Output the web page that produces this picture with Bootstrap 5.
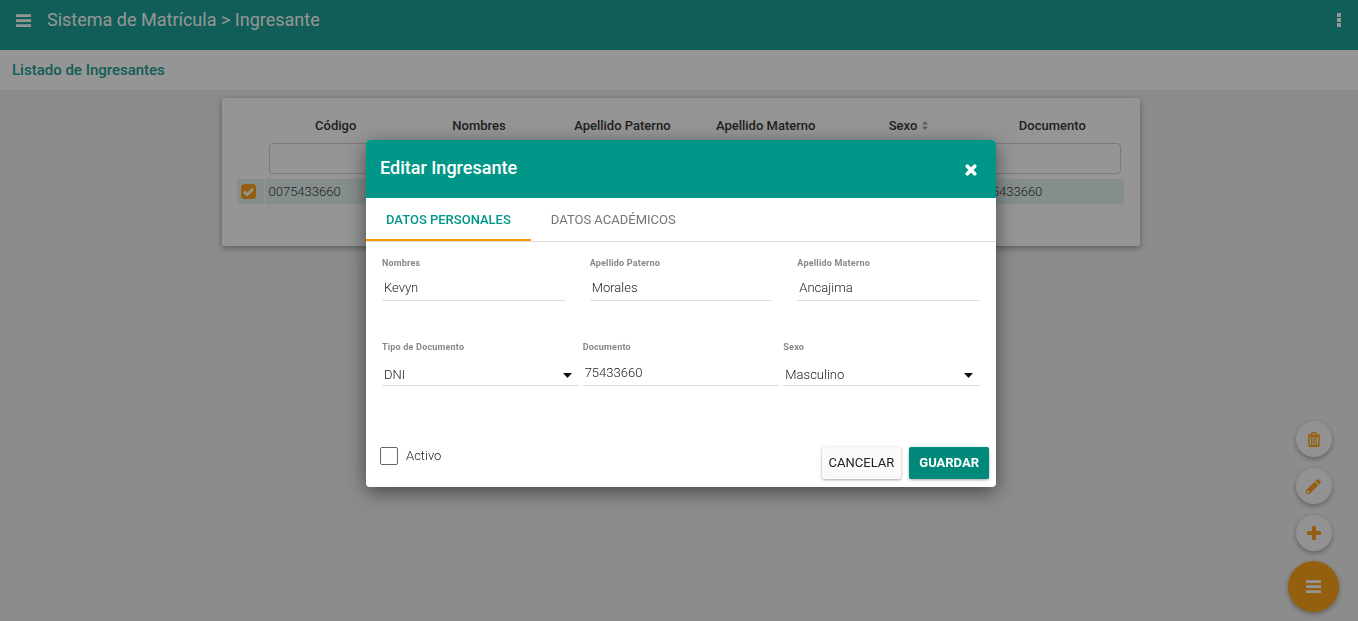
<!DOCTYPE html>
<html lang="es">
<head>
<meta charset="utf-8">
<meta name="viewport" content="width=device-width, initial-scale=1">
<title>Sistema de Matrícula</title>
<link href="https://cdn.jsdelivr.net/npm/bootstrap@5.3.0/dist/css/bootstrap.min.css" rel="stylesheet">
<style>
  :root { --teal: #009688; --teal-dark: #00897b; --amber: #ff9800; }
  body { font-family: Roboto, sans-serif; font-size: 13px; font-weight: 300; line-height: 20px; color: #212121; background: #eee; min-height: 100vh; }
  svg { display: block; }
  .app-bar { background: var(--teal); height: 50px; padding: 0 16px 10px; color: #fff; }
  .app-title { font-size: 18px; font-weight: 400; line-height: 24px; }
  .page-head { background: #fff; height: 40px; padding: 0 12px; }
  .page-head h1 { font-size: 15px; font-weight: 500; color: var(--teal); }
  .list-area { padding: 8px 16px 8px 20px; }
  .list-panel { max-width: 918px; min-height: 148px; padding: 15px 16px 15px 15px; background: #fff; border-radius: 2px; box-shadow: 0 2px 5px rgba(0,0,0,.26), 0 2px 10px rgba(0,0,0,.16); }
  .grid-table { table-layout: fixed; width: 100%; }
  .grid-table .pick { width: 27px; }
  .grid-table th { font-weight: 500; text-align: center; height: 25px; padding: 0; }
  .grid-table .filters td { padding: 5px 3px 5px 5px; }
  .grid-table .filters input { height: 31px; border-radius: 4px; border: 1px solid #ccc; }
  .grid-table .picked td { background: #e0f2ef; height: 25px; padding: 0 4px; }
  .grid-table .picked td:first-child { border-right: 1px solid #fff; }
  .row-check { width: 15px; height: 15px; margin: 0; border-radius: 3px !important; display: block; }
  .row-check:checked { background-color: var(--amber); border-color: var(--amber); background-size: 15px 15px; background-image: url("data:image/svg+xml,%3Csvg xmlns='http://www.w3.org/2000/svg' viewBox='0 0 15 15'%3E%3Cpath d='M3 7.500l3.200 3.200L12 5' fill='none' stroke='%23fff' stroke-width='2.600'/%3E%3C/svg%3E"); }
  .fabs { right: 19px; bottom: 9px; gap: 11px; }
  .fab { width: 36px; height: 36px; border: 0; border-radius: 50%; background: #fafafa; color: var(--amber); box-shadow: 0 2px 5px rgba(0,0,0,.35); }
  .fab-main { width: 51px; height: 51px; background: var(--amber); color: #fff; margin-top: -1px; }
  .veil { background: rgba(33,33,33,.48); z-index: 1040; }
  .edit-modal { padding: 140px 16px 16px 20px; z-index: 1050; }
  .edit-modal .modal-dialog { max-width: 630px; margin: 0 auto; }
  .edit-modal .modal-content { border: 0; border-radius: 4px; box-shadow: 0 5px 20px rgba(0,0,0,.5); color: inherit; }
  .edit-modal .modal-header { background: var(--teal); color: #fff; height: 58px; padding: 0 19px 2px 14px; border: 0; border-radius: 4px 4px 0 0; }
  .edit-modal .modal-title { font-size: 18px; font-weight: 500; line-height: 24px; }
  .plain-btn { background: none; border: 0; padding: 0; color: inherit; }
  .edit-tabs { border-bottom: 1px solid #ddd; }
  .edit-tabs .nav-link { border: 0; border-bottom: 2px solid transparent; border-radius: 0; margin: 0; height: 43px; padding: 12px 20px 9px; font-weight: 400; color: #757575; text-transform: uppercase; }
  .edit-tabs .nav-link.active { color: var(--teal); border-color: var(--amber); font-weight: 500; background: none; }
  .edit-modal .modal-body { padding: 15px 16px 0; }
  .fields-a, .fields-b { display: grid; grid-template-columns: repeat(3, minmax(0, 1fr)); }
  .fields-a { column-gap: 25px; height: 84px; }
  .fields-b { column-gap: 4px; height: 104px; }
  .field label { display: block; font-size: 9px; font-weight: 700; line-height: 12px; color: #888; letter-spacing: .2px; }
  .line-in { display: block; width: 100%; height: 32px; border: 0; border-bottom: 1px solid #ddd; border-radius: 0; background: #fff; padding: 9px 2px 3px; outline: 0; font-weight: 300; color: #212121; }
  .fields-b label { margin-bottom: 1px; }
  .fields-b select.line-in { appearance: none; padding: 10px 2px 0; background: url("data:image/svg+xml,%3Csvg xmlns='http://www.w3.org/2000/svg' viewBox='0 0 9 5'%3E%3Cpath d='M0 0h9L4.500 5z' fill='%23111'/%3E%3C/svg%3E") no-repeat right 7px bottom 7px / 9px 5px; }
  .edit-modal .modal-footer { border: 0; padding: 1px 7px 8px 14px; align-items: flex-start; }
  .edit-modal .modal-footer > * { margin: 0; }
  .act { height: 32px; margin-top: 1px; border: 0; border-radius: 2px; padding: 0 10px; font-size: 13px; font-weight: 400; box-shadow: 0 1px 3px rgba(0,0,0,.35); }
  .act-cancel, .act-cancel:hover { background: #fafafa; color: #212121; padding: 0 7px; }
  .act-save, .act-save:hover { background: var(--teal-dark); color: #fff; font-weight: 700; }
  .active-check { width: 18px; height: 18px; margin: 0; border: 1px solid #666; border-radius: 2px !important; }
</style>
</head>
<body>
<header class="app-bar d-flex align-items-center justify-content-between">
  <div class="d-flex align-items-center gap-3">
    <button class="plain-btn" aria-label="Menú"><svg width="15" height="13" viewBox="0 0 15 13" fill="currentColor"><path d="M0 .3h15v2.600H0zM0 5.300h15v2.600H0zM0 10.300h15v2.600H0z"/></svg></button>
    <span class="app-title">Sistema de Matrícula &gt; Ingresante</span>
  </div>
  <button class="plain-btn" aria-label="Opciones"><svg width="6" height="14" fill="currentColor"><path d="M1 0h4v4H1zM1 5h4v4H1zM1 10h4v4H1z"/></svg></button>
</header>
<section class="page-head d-flex align-items-center"><h1 class="m-0">Listado de Ingresantes</h1></section>
<main class="list-area">
  <div class="list-panel mx-auto">
    <table class="grid-table">
      <thead>
        <tr><th class="pick"></th><th>Código</th><th>Nombres</th><th>Apellido Paterno</th><th>Apellido Materno</th>
          <th><span class="d-inline-flex align-items-center gap-1">Sexo <svg width="8" height="9" fill="#999"><path d="M4 0l3 3.500H1zM1 5.500h6L4 9z"/></svg></span></th><th>Documento</th></tr>
      </thead>
      <tbody>
        <tr class="filters"><td></td>
          <td><input class="form-control" aria-label="Código"></td><td><input class="form-control" aria-label="Nombres"></td><td><input class="form-control" aria-label="Apellido Paterno"></td><td><input class="form-control" aria-label="Apellido Materno"></td><td><input class="form-control" aria-label="Sexo"></td><td><input class="form-control" aria-label="Documento"></td></tr>
        <tr class="picked"><td><input type="checkbox" class="form-check-input row-check" checked aria-label="Seleccionar"></td><td>0075433660</td><td></td><td></td><td></td><td></td><td>75433660</td></tr>
      </tbody>
    </table>
  </div>
</main>
<div class="fabs position-fixed d-flex flex-column align-items-center">
  <button class="fab d-flex align-items-center justify-content-center" aria-label="Eliminar"><svg width="14" height="15" viewBox="0 0 14 15" fill="none" stroke="currentColor"><path d="M4.500 2.500V1.500L5.500 .7h3l1 .8v1" stroke-width="1.200"/><path d="M.5 3h13" stroke-width="1.400"/><path d="M2 3.500v9.500q0 1.300 1.300 1.300h7.400q1.300 0 1.300-1.300V3.500" stroke-width="1.500"/><path d="M4.700 5v7.500M7 5v7.500M9.300 5v7.500" stroke-width="1.300"/><path d="M2.500 4.200h9M2.500 13.500h9" stroke-width="1.400"/></svg></button>
  <button class="fab d-flex align-items-center justify-content-center" aria-label="Editar"><svg width="15" height="15" viewBox="0 0 15 15" fill="currentColor" fill-rule="evenodd"><path d="M8.700 2.700l3.600 3.600-8.500 8.500H0V11.200zM1.200 11.900v1.900h1.900l.8-.8-2-2z"/><path d="M9.400 2L11 .5q.8-.8 1.600 0l1.900 1.900q.8.800 0 1.600L13 5.600z"/></svg></button>
  <button class="fab d-flex align-items-center justify-content-center" aria-label="Agregar"><svg width="14" height="14" viewBox="0 0 14 14" fill="currentColor"><path d="M5 1q0-1 1-1h2q1 0 1 1v4h4q1 0 1 1v2q0 1-1 1H9v4q0 1-1 1H6q-1 0-1-1V9H1q-1 0-1-1V6q0-1 1-1h4z"/></svg></button>
  <button class="fab fab-main d-flex align-items-center justify-content-center" aria-label="Acciones"><svg width="15" height="13" viewBox="0 0 15 13" fill="currentColor"><path d="M0 .3h15v2.600H0zM0 5.300h15v2.600H0zM0 10.300h15v2.600H0z"/></svg></button>
</div>
<div class="veil position-fixed top-0 start-0 w-100 h-100"></div>
<div class="modal edit-modal d-block" role="dialog" aria-modal="true" aria-labelledby="dlg-title">
  <div class="modal-dialog">
    <form class="modal-content">
      <div class="modal-header">
        <h2 class="modal-title" id="dlg-title">Editar Ingresante</h2>
        <button type="button" class="plain-btn pt-1" aria-label="Cerrar"><svg width="12" height="12" viewBox="0 0 13 13" stroke="currentColor" stroke-width="4" stroke-linecap="round"><path d="M2.500 2.500l8 8M10.500 2.500l-8 8"/></svg></button>
      </div>
      <ul class="nav nav-tabs edit-tabs">
        <li class="nav-item"><a class="nav-link active" href="#personales">Datos Personales</a></li>
        <li class="nav-item"><a class="nav-link" href="#academicos">Datos Académicos</a></li>
      </ul>
      <div class="modal-body">
        <div class="fields-a">
          <div class="field"><label for="nom">Nombres</label><input id="nom" class="line-in" value="Kevyn"></div>
          <div class="field"><label for="pat">Apellido Paterno</label><input id="pat" class="line-in" value="Morales"></div>
          <div class="field"><label for="mat">Apellido Materno</label><input id="mat" class="line-in" value="Ancajima"></div>
        </div>
        <div class="fields-b">
          <div class="field"><label for="tipo">Tipo de Documento</label><select id="tipo" class="line-in"><option>DNI</option></select></div>
          <div class="field"><label for="doc">Documento</label><input id="doc" class="line-in" value="75433660"></div>
          <div class="field"><label for="sexo">Sexo</label><select id="sexo" class="line-in"><option>Masculino</option><option>Femenino</option></select></div>
        </div>
      </div>
      <div class="modal-footer justify-content-between">
        <div class="d-flex align-items-center"><input type="checkbox" id="activo" class="form-check-input active-check"><label for="activo" class="ps-2">Activo</label></div>
        <div class="d-flex gap-2"><button type="button" class="btn act act-cancel">CANCELAR</button><button type="submit" class="btn act act-save">GUARDAR</button></div>
      </div>
    </form>
  </div>
</div>
<script src="https://cdn.jsdelivr.net/npm/bootstrap@5.3.0/dist/js/bootstrap.bundle.min.js"></script>
</body>
</html>
